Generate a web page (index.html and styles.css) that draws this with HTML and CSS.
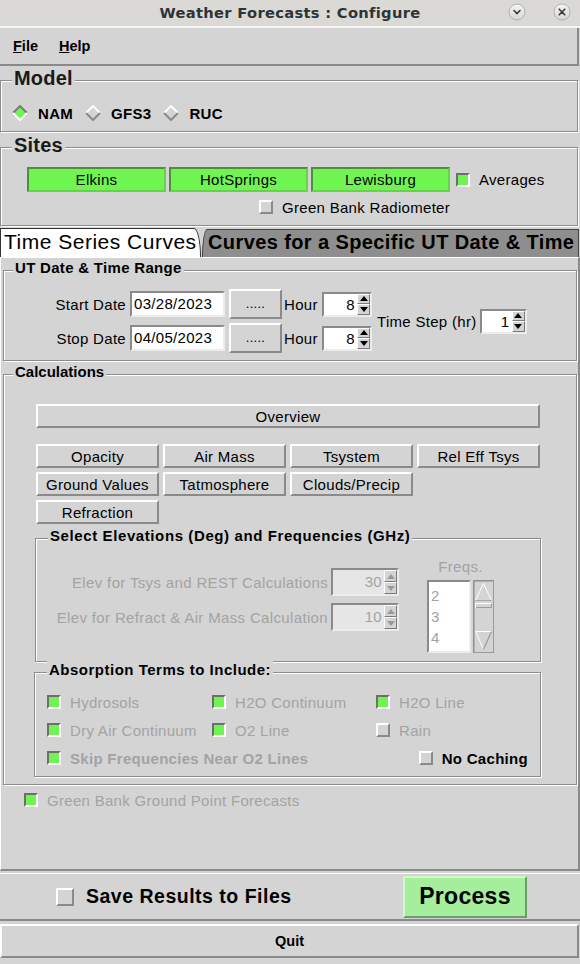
FILE: index.html
```html
<!DOCTYPE html>
<html>
<head>
<meta charset="utf-8">
<title>Weather Forecasts : Configure</title>
<link rel="stylesheet" href="styles.css">
</head>
<body>
<div class="app">
  <div class="titlebar">
    <div></div>
    <div class="title">Weather Forecasts : Configure</div>
    <div class="wbtns">
      <svg width="18" height="18" viewBox="0 0 18 18"><defs><linearGradient id="wg" x1="0" y1="0" x2="0" y2="1"><stop offset="0" stop-color="#f6f6f5"/><stop offset="1" stop-color="#d8d6d2"/></linearGradient></defs><circle cx="9" cy="9" r="8" fill="url(#wg)" stroke="#b3b1ad"/><path d="M6 7.5 L9 10.5 L12 7.5" stroke="#3c3c3c" stroke-width="1.6" fill="none" stroke-linecap="round"/></svg>
      <svg width="18" height="18" viewBox="0 0 18 18"><circle cx="9" cy="9" r="8" fill="url(#wg)" stroke="#b3b1ad"/><path d="M6.2 6.2 L11.8 11.8 M11.8 6.2 L6.2 11.8" stroke="#3c3c3c" stroke-width="1.6" fill="none" stroke-linecap="round"/></svg>
    </div>
  </div>

  <div class="menubar">
    <span class="menu"><u>F</u>ile</span>
    <span class="menu"><u>H</u>elp</span>
  </div>

  <section class="group g-model">
    <div class="gtitle big">Model</div>
    <div class="radios">
      <span class="radio"><svg width="16" height="16" viewBox="0 0 16 16"><path d="M1 8 L8 1 L15 8 L8 15 Z" fill="#70f452"/><path d="M1 8 L8 1 L15 8" stroke="#7a7a7a" stroke-width="2" fill="none"/><path d="M1 8 L8 15 L15 8" stroke="#ffffff" stroke-width="2" fill="none"/></svg>NAM</span>
      <span class="radio"><svg width="16" height="16" viewBox="0 0 16 16"><path d="M1 8 L8 1 L15 8" stroke="#ffffff" stroke-width="2" fill="none"/><path d="M1 8 L8 15 L15 8" stroke="#8a8a8a" stroke-width="2" fill="none"/></svg>GFS3</span>
      <span class="radio"><svg width="16" height="16" viewBox="0 0 16 16"><path d="M1 8 L8 1 L15 8" stroke="#ffffff" stroke-width="2" fill="none"/><path d="M1 8 L8 15 L15 8" stroke="#8a8a8a" stroke-width="2" fill="none"/></svg>RUC</span>
    </div>
  </section>

  <section class="group g-sites">
    <div class="gtitle big">Sites</div>
    <div class="site-row">
      <span class="sitebtn">Elkins</span>
      <span class="sitebtn">HotSprings</span>
      <span class="sitebtn">Lewisburg</span>
      <span class="check avg"><i class="cb on"></i>Averages</span>
    </div>
    <div class="radiometer">
      <span class="check"><i class="cb"></i>Green Bank Radiometer</span>
    </div>
  </section>

  <div class="tabs">
    <div class="tab active">Time Series Curves</div>
    <div class="tab other">Curves for a Specific UT Date &amp; Time</div>
  </div>

  <div class="tabbody">
    <section class="group g-ut">
      <div class="gtitle">UT Date &amp; Time Range</div>
      <div class="ut-layout">
        <div class="ut-grid">
          <span class="lbl">Start Date</span>
          <span class="entry">03/28/2023</span>
          <span class="btn dots">.....</span>
          <span class="lbl">Hour</span>
          <span class="spin"><span class="sval">8</span><span class="arrows"><span class="arr"><i class="up"></i></span><span class="arr"><i class="down"></i></span></span></span>

          <span class="lbl">Stop Date</span>
          <span class="entry">04/05/2023</span>
          <span class="btn dots">.....</span>
          <span class="lbl">Hour</span>
          <span class="spin"><span class="sval">8</span><span class="arrows"><span class="arr"><i class="up"></i></span><span class="arr"><i class="down"></i></span></span></span>
        </div>
        <span class="lbl step">Time Step (hr)</span>
        <span class="spin step-spin"><span class="sval">1</span><span class="arrows"><span class="arr"><i class="up"></i></span><span class="arr"><i class="down"></i></span></span></span>
      </div>
    </section>

    <section class="group g-calc">
      <div class="gtitle">Calculations</div>
      <div class="btn overview">Overview</div>
      <div class="calc-grid">
        <span class="btn">Opacity</span>
        <span class="btn">Air Mass</span>
        <span class="btn">Tsystem</span>
        <span class="btn">Rel Eff Tsys</span>
        <span class="btn">Ground Values</span>
        <span class="btn">Tatmosphere</span>
        <span class="btn">Clouds/Precip</span>
        <span class="empty"></span>
        <span class="btn">Refraction</span>
      </div>

      <section class="group g-elev">
        <div class="gtitle">Select Elevations (Deg) and Frequencies (GHz)</div>
        <div class="elev-layout">
          <div class="elev-grid">
            <span class="lbl dis">Elev for Tsys and REST Calculations</span>
            <span class="spin dspin"><span class="sval">30</span><span class="arrows"><span class="arr"><i class="up"></i></span><span class="arr"><i class="down"></i></span></span></span>
            <span class="lbl dis">Elev for Refract &amp; Air Mass Calculation</span>
            <span class="spin dspin"><span class="sval">10</span><span class="arrows"><span class="arr"><i class="up"></i></span><span class="arr"><i class="down"></i></span></span></span>
          </div>
          <div class="freqs">
            <div class="freqs-lbl dis">Freqs.</div>
            <div class="freqs-box">
              <div class="listbox"><div>2</div><div>3</div><div>4</div></div>
              <svg class="sbar" width="21" height="73" viewBox="0 0 21 73">
                <rect x="0.5" y="0.5" width="20" height="72" fill="#d4d4d4" stroke="#9a9a9a"/>
                <path d="M1 1 H20 M1 1 V72" stroke="#8a8a8a" stroke-width="1"/>
                <path d="M2.5 20.5 L10.5 3.5 L18.5 20.5" fill="none" stroke="#ffffff" stroke-width="1"/>
                <path d="M2.5 20.5 H18.5" stroke="#a8a8a8" stroke-width="1"/>
                <rect x="2.5" y="23.5" width="16" height="4" fill="#d4d4d4" stroke="#ffffff"/>
                <path d="M3 27.5 H18.5 V23.5" fill="none" stroke="#9a9a9a"/>
                <path d="M2.5 51.5 H18.5" stroke="#ffffff" stroke-width="1"/>
                <path d="M2.5 51.5 L10.5 69.5" stroke="#ffffff" stroke-width="1"/>
                <path d="M10.5 69.5 L18.5 51.5" stroke="#9a9a9a" stroke-width="1.2"/>
              </svg>
            </div>
          </div>
        </div>
      </section>

      <section class="group g-abs">
        <div class="gtitle">Absorption Terms to Include:</div>
        <div class="abs-grid">
          <span class="check dis"><i class="cb on"></i>Hydrosols</span>
          <span class="check dis"><i class="cb on"></i>H2O Continuum</span>
          <span class="check dis"><i class="cb on"></i>H2O Line</span>
          <span class="check dis"><i class="cb on"></i>Dry Air Continuum</span>
          <span class="check dis"><i class="cb on"></i>O2 Line</span>
          <span class="check dis"><i class="cb"></i>Rain</span>
          <span class="check dis bold skip"><i class="cb on"></i>Skip Frequencies Near O2 Lines</span>
          <span class="check bold nocache"><i class="cb"></i>No Caching</span>
        </div>
      </section>
    </section>

    <div class="check dis gbgp"><i class="cb on"></i>Green Bank Ground Point Forecasts</div>
  </div>

  <div class="bottombar">
    <span class="check save"><i class="cb big"></i>Save Results to Files</span>
    <span class="btn process">Process</span>
  </div>
  <div class="btn quit">Quit</div>
</div>
</body>
</html>
```

FILE: styles.css
```css
* { box-sizing: border-box; }

html, body {
  margin: 0;
  padding: 0;
}

body {
  width: 580px;
  height: 964px;
  overflow: hidden;
  background: #d4d4d4;
  font-family: "Liberation Sans", Arial, sans-serif;
  font-size: 15px;
  letter-spacing: 0.3px;
  color: #000;
}

.app {
  width: 580px;
}

/* ---------- title bar ---------- */
.titlebar {
  height: 28px;
  background: #dad9d5;
  border-bottom: 2px solid #f4f4f3;
  display: grid;
  grid-template-columns: 1fr auto 1fr;
  align-items: center;
}
.title {
  font-family: "DejaVu Sans", sans-serif;
  font-weight: bold;
  font-size: 14.7px;
  letter-spacing: 0.3px;
  color: #2e3436;
  padding-bottom: 2px;
}
.wbtns {
  display: flex;
  justify-content: flex-end;
  gap: 27px;
  padding-right: 9px;
  padding-bottom: 2px;
}
.wbtns svg { display: block; }

/* ---------- menu bar ---------- */
.menubar {
  width: 579px;
  height: 38px;
  background: #d4d4d4;
  border-bottom: 2px solid #8a8a8a;
  border-right: 2px solid #8a8a8a;
  display: flex;
  align-items: center;
  gap: 21px;
  padding-left: 13px;
  padding-bottom: 1px;
}
.menu {
  font-weight: bold;
  font-size: 14.5px;
  letter-spacing: 0;
}

/* ---------- label frames ---------- */
.group {
  border: 1px solid #8c8c8c;
  box-shadow: 1px 1px 0 #ffffff, inset 1px 1px 0 #ffffff;
}
.gtitle {
  width: max-content;
  margin: -12px 0 0 9px;
  padding: 0 2px;
  background: #d4d4d4;
  line-height: 18px;
  height: 18px;
  font-weight: bold;
  font-size: 15px;
  letter-spacing: 0.3px;
}
.gtitle.big {
  font-size: 20px;
  line-height: 22px;
  height: 22px;
  margin: -14px 0 0 11px;
  letter-spacing: 0.2px;
  color: #1a1a1a;
}

/* Model */
.g-model {
  width: 578px;
  margin-top: 14px;
  padding-bottom: 8px;
}
.radios {
  display: flex;
  align-items: center;
  height: 20px;
  margin-top: 14px;
  padding-left: 11px;
  gap: 12px;
}
.radio {
  display: flex;
  align-items: center;
  gap: 10px;
  font-weight: bold;
  font-size: 15px;
  letter-spacing: 0.3px;
}
.radio svg { display: block; }

/* Sites */
.g-sites {
  width: 578px;
  margin-top: 15px;
  padding-bottom: 10px;
}
.site-row {
  display: flex;
  align-items: center;
  margin-top: 11px;
  padding-left: 26px;
  gap: 3px;
}
.sitebtn {
  width: 139px;
  height: 25px;
  background: #70f452;
  border: 2px solid;
  border-color: #4e8e3e #63d448 #63d448 #4e8e3e;
  display: flex;
  align-items: center;
  justify-content: center;
  font-size: 15px;
}
.avg { margin-left: 3px; }
.radiometer {
  margin-top: 7px;
  height: 16px;
  display: flex;
  align-items: center;
  padding-left: 258px;
}

/* checkboxes */
.check {
  display: flex;
  align-items: center;
  gap: 9px;
  white-space: nowrap;
}
.cb {
  display: block;
  flex: none;
  width: 14px;
  height: 14px;
  border: 2px solid;
  border-color: #ffffff #8a8a8a #8a8a8a #ffffff;
  background: #d4d4d4;
}
.cb.on {
  background: #70f452;
  border-color: #6e6e6e #ffffff #ffffff #6e6e6e;
}
.cb.big {
  width: 18px;
  height: 18px;
}
.dis { color: #a3a3a3; }
.bold { font-weight: bold; }

/* ---------- tabs ---------- */
.tabs {
  display: flex;
  align-items: flex-end;
  height: 29px;
  margin-top: 2px;
}
.tab {
  height: 29px;
  border: 1px solid #333;
  border-bottom: none;
  font-size: 20px;
  line-height: 26px;
  white-space: nowrap;
}
.tab.active {
  width: 201px;
  background: #ffffff;
  padding-left: 3px;
  border-top-right-radius: 7px 29px;
  font-size: 21px;
  letter-spacing: 0.5px;
}
.tab.other {
  width: 377px;
  height: 28px;
  margin-left: 1px;
  background: #8e8e8e;
  border-color: #444;
  padding-left: 5px;
  font-weight: bold;
  letter-spacing: 0.4px;
  border-top-left-radius: 5px 28px;
  line-height: 25px;
}

.tabbody {
  width: 580px;
  height: 614px;
  border-top: 1px solid #ffffff;
  border-left: 1px solid #ffffff;
  border-bottom: 2px solid #8a8a8a;
  border-right: 2px solid #8a8a8a;
  padding: 0 1px 0 2px;
}

/* ---------- UT date ---------- */
.g-ut {
  margin-top: 12px;
  padding-bottom: 7px;
}
.ut-layout {
  display: flex;
  align-items: center;
  margin-top: 12px;
}
.ut-grid {
  display: grid;
  grid-template-columns: 122px 95px 53px 34px 48px;
  grid-auto-rows: 30px;
  row-gap: 4px;
  column-gap: 4px;
  align-items: center;
}
.ut-grid .lbl:nth-child(5n+1) { text-align: right; }
.ut-grid .spin { margin-left: -2px; }
.ut-grid .lbl:nth-child(5n+4) { margin-left: -2px; }
.lbl { white-space: nowrap; }
.entry {
  height: 26px;
  background: #ffffff;
  border: 2px solid;
  border-color: #8a8a8a #ececec #ececec #8a8a8a;
  padding-left: 2px;
  line-height: 22px;
  font-size: 15px;
}
.btn {
  background: #d4d4d4;
  border: 2px solid;
  border-color: #ffffff #8a8a8a #8a8a8a #ffffff;
  display: flex;
  align-items: center;
  justify-content: center;
  white-space: nowrap;
}
.btn.dots {
  height: 30px;
  font-size: 13px;
  padding-bottom: 2px;
}
.spin {
  height: 25px;
  background: #ffffff;
  border: 2px solid;
  border-color: #8a8a8a #ececec #ececec #8a8a8a;
  display: flex;
  align-items: stretch;
}
.sval {
  flex: 1;
  text-align: right;
  line-height: 21px;
  padding-right: 2px;
}
.arrows {
  width: 13px;
  display: flex;
  flex-direction: column;
  background: #d4d4d4;
}
.arr {
  flex: 1;
  border: 1px solid;
  border-color: #ffffff #7a7a7a #7a7a7a #ffffff;
  display: flex;
  align-items: center;
  justify-content: center;
}
.arr i {
  display: block;
  width: 0;
  height: 0;
  border-left: 4px solid transparent;
  border-right: 4px solid transparent;
}
.arr i.up { border-bottom: 5px solid #000; }
.arr i.down { border-top: 5px solid #000; }

.step { margin-left: 5px; }
.step-spin {
  width: 47px;
  margin-left: 3px;
}

/* ---------- calculations ---------- */
.g-calc {
  margin-top: 13px;
  padding: 0 0 7px 32px;
}
.g-calc > .gtitle { margin-left: -23px; letter-spacing: 0; }
.overview {
  width: 504px;
  height: 24px;
  margin-top: 23px;
}
.calc-grid {
  width: 504px;
  margin-top: 16px;
  display: grid;
  grid-template-columns: repeat(4, 1fr);
  grid-auto-rows: 24px;
  column-gap: 4px;
  row-gap: 4px;
}

/* elevations */
.g-elev {
  width: 506px;
  margin-top: 14px;
  margin-left: -1px;
  padding-bottom: 8px;
}
.g-elev .gtitle { margin-left: 12px; letter-spacing: 0.6px; }
.g-abs .gtitle { margin-left: 0; letter-spacing: 0.5px; }
.elev-layout {
  display: flex;
  align-items: flex-start;
}
.elev-grid {
  margin-top: 23px;
  display: grid;
  grid-template-columns: 292px 68px;
  grid-auto-rows: 28px;
  row-gap: 7px;
  column-gap: 3px;
  align-items: center;
}
.elev-grid .lbl { text-align: right; letter-spacing: 0.35px; }
.dspin {
  height: 28px;
  background: #e6e6e6;
  color: #a3a3a3;
}
.dspin .sval { line-height: 24px; }
.dspin .arr i.up { border-bottom-color: #9a9a9a; }
.dspin .arr i.down { border-top-color: #9a9a9a; }
.freqs {
  margin-top: 13px;
  margin-left: 28px;
  width: 67px;
}
.freqs-lbl {
  line-height: 18px;
  text-align: center;
}
.freqs-box {
  display: flex;
  gap: 2px;
  margin-top: 4px;
}
.listbox {
  width: 44px;
  height: 73px;
  background: #ffffff;
  border: 2px solid;
  border-color: #8a8a8a #ececec #ececec #8a8a8a;
  color: #a3a3a3;
  padding: 3px 0 0 2px;
  line-height: 21px;
}
.sbar { display: block; }

/* absorption */
.g-abs {
  width: 507px;
  margin-top: 10px;
  margin-left: -2px;
  padding: 0 12px 8px 12px;
}
.abs-grid {
  margin-top: 13px;
  display: grid;
  grid-template-columns: 165px 164px 1fr;
  grid-auto-rows: 20px;
  row-gap: 8px;
  align-items: center;
}
.skip { grid-column: 1 / 3; }
.nocache { justify-self: end; }

.gbgp {
  margin: 6px 0 0 21px;
  height: 18px;
}

/* ---------- bottom ---------- */
.bottombar {
  width: 580px;
  height: 48px;
  margin-top: 2px;
  border-top: 1px solid #ffffff;
  border-bottom: 2px solid #8a8a8a;
  display: flex;
  align-items: center;
  padding-left: 56px;
  padding-right: 53px;
}
.save {
  font-weight: bold;
  font-size: 19.5px;
  letter-spacing: 0.5px;
  gap: 12px;
}
.process {
  margin-left: auto;
  width: 124px;
  height: 42px;
  background: #a5ee9c;
  border-color: #d2f8cc #6f9a6a #6f9a6a #d2f8cc;
  font-weight: bold;
  font-size: 23px;
  letter-spacing: 0.3px;
}
.quit {
  width: 579px;
  height: 34px;
  margin-top: 3px;
  font-weight: bold;
  font-size: 14.5px;
  letter-spacing: 0;
}
```
